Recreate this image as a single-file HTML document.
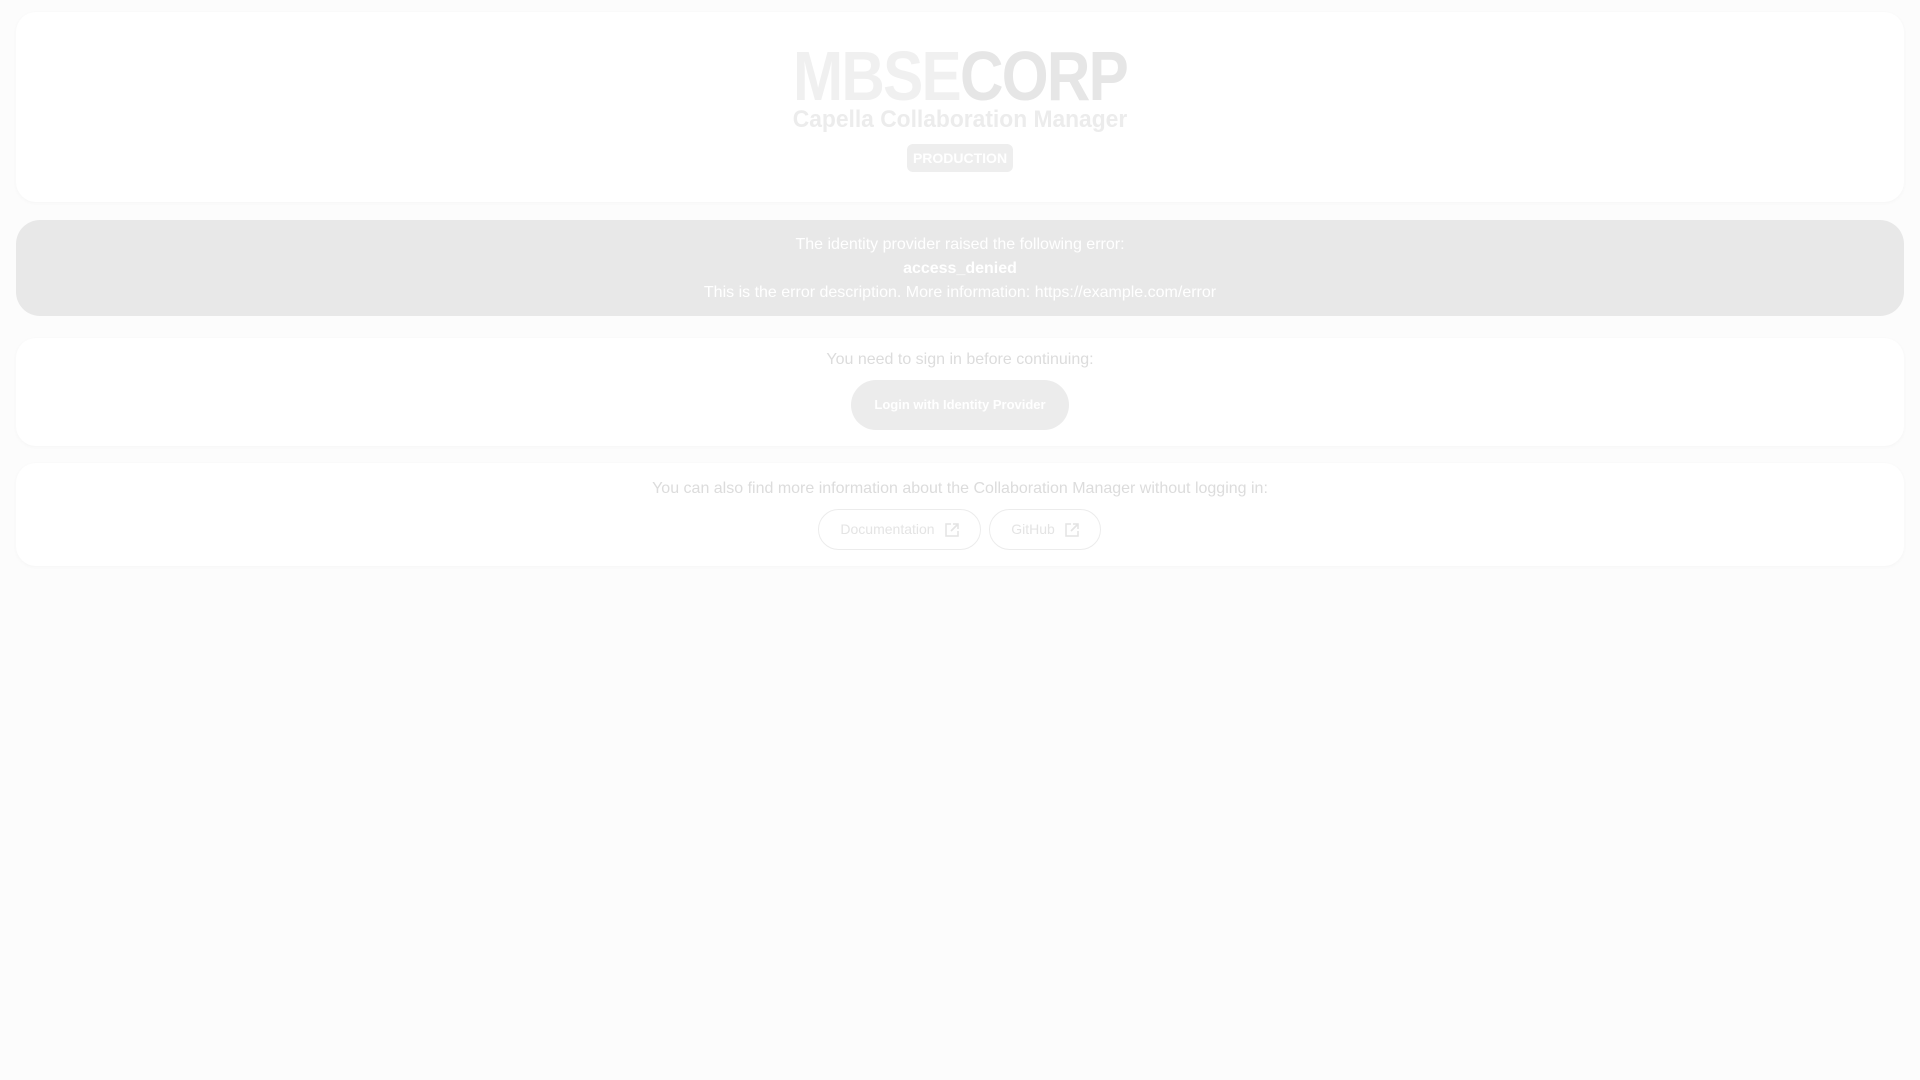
<!DOCTYPE html>
<html><head><meta charset="utf-8"><style>
*{box-sizing:border-box;margin:0;padding:0}
body{width:1920px;height:1080px;background:#fcfcfc;font-family:"Liberation Sans",Roboto,sans-serif;position:relative;overflow:hidden}
.card{position:absolute;left:16px;width:1888px;background:#fff;border-radius:20px;box-shadow:0 1px 4px rgba(0,0,0,0.03);text-align:center}
.logo{position:absolute;left:0;right:0;top:29px;font-size:70px;font-weight:bold;letter-spacing:-2px;line-height:70px;transform:scaleX(0.86)}
.sub{position:absolute;left:0;right:0;top:94px;font-size:24px;font-weight:bold;color:#ececec;line-height:28px;transform:scaleX(0.95)}
.badge{position:absolute;top:132px;width:106px;height:28px;border-radius:6px;background:#eeeeee;color:#fff;font-weight:bold;font-size:14px;line-height:28px;left:891px}
.err{position:absolute;left:16px;top:220px;width:1888px;height:96px;background:#e8e8e8;border-radius:24px;color:#fff;font-size:16px;text-align:center}
.err div{position:absolute;left:0;right:0;line-height:20px}
.t{position:absolute;left:0;right:0;font-size:16px;color:#dcdcdc;line-height:20px}
.btn{position:absolute;left:835px;top:42px;width:218px;height:50px;border-radius:25px;background:#ececec;color:#fff;font-size:13px;font-weight:bold;line-height:50px;white-space:nowrap}
.ob{position:absolute;top:46px;height:41px;border:1px solid #ececec;border-radius:21px;color:#e4e4e4;font-size:14px;line-height:39px;white-space:nowrap}
.ob svg{vertical-align:-3px;margin-left:10px}
</style></head><body>
<div class="card" style="top:12px;height:190px">
  <div class="logo"><span style="color:#f0f0f0">MBSE</span><span style="color:#e6e6e6">CORP</span></div>
  <div class="sub">Capella Collaboration Manager</div>
  <div class="badge">PRODUCTION</div>
</div>
<div class="err">
  <div style="top:15px">The identity provider raised the following error:</div>
  <div style="top:39px;font-weight:bold">access_denied</div>
  <div style="top:63px">This is the error description. More information: https://example.com/error</div>
</div>
<div class="card" style="top:338px;height:108px">
  <div class="t" style="top:12px">You need to sign in before continuing:</div>
  <div class="btn">Login with Identity Provider</div>
</div>
<div class="card" style="top:463px;height:103px">
  <div class="t" style="top:16px">You can also find more information about the Collaboration Manager without logging in:</div>
  <div class="ob" style="left:802px;width:163px">Documentation<svg width="14" height="14" viewBox="0 0 14 14" fill="none" stroke="#e4e4e4" stroke-width="1.6"><path d="M6 1H1v12h12V8M8 1h5v5M13 1L6 8"/></svg></div>
  <div class="ob" style="left:973px;width:112px">GitHub<svg width="14" height="14" viewBox="0 0 14 14" fill="none" stroke="#e4e4e4" stroke-width="1.6"><path d="M6 1H1v12h12V8M8 1h5v5M13 1L6 8"/></svg></div>
</div>
</body></html>
